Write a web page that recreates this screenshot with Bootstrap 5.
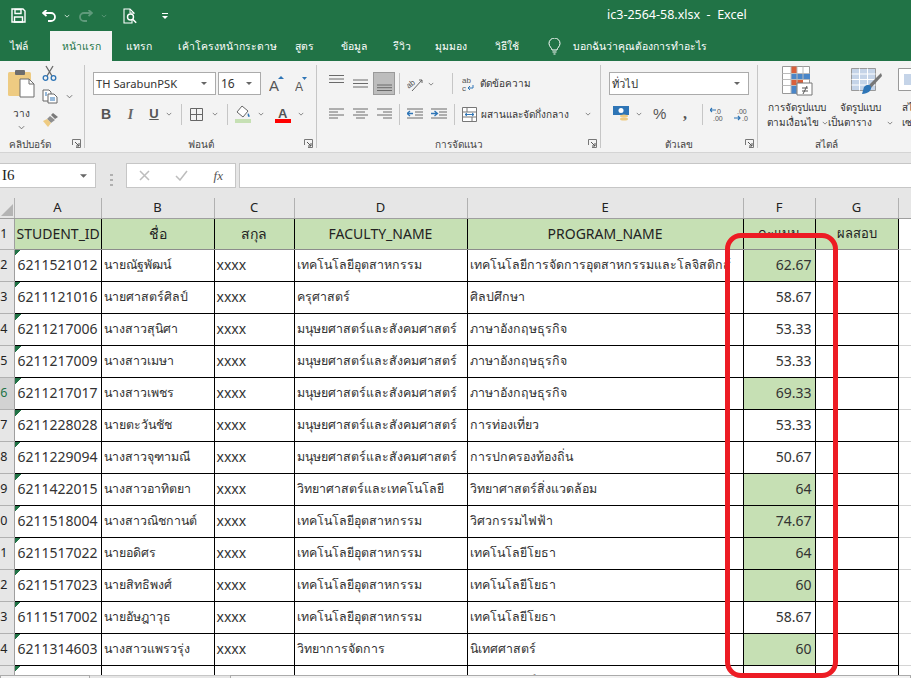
<!DOCTYPE html>
<html lang="th">
<head>
    <meta charset="UTF-8">
    <meta name="viewport" content="width=device-width, initial-scale=1.0">
    <title>ic3-2564-58.xlsx - Excel</title>
    <link href="https://cdn.jsdelivr.net/npm/bootstrap@5.3.0/dist/css/bootstrap.min.css" rel="stylesheet">
    <style>
        html, body { height: 100%; overflow: hidden; }
        body {
            width: 911px;
            height: 678px;
            position: relative;
            background: #e6e6e6;
            color: #333;
            font-family: "Noto Sans", "Liberation Sans", sans-serif;
            font-size: 12px;
        }
        svg { display: block; flex: none; }

        /* small spacing steps bootstrap has no class for */
        .ml4 { margin-left: 4px; } .ml5 { margin-left: 5px; } .ml7 { margin-left: 7px; } .ml8 { margin-left: 8px; }
        .ml9 { margin-left: 9px; } .ml11 { margin-left: 11px; }
        .mx7 { margin-left: 7px; margin-right: 7px; } .mx9 { margin-left: 9px; margin-right: 9px; }
        .mr7 { margin-right: 7px; }

        /* title bar */
        .title-bar { height: 31px; background: #217346; color: #fff; }
        .qat { width: 607px; padding-left: 11px; }
        .qat-title { font-size: 12.5px; white-space: nowrap; }

        /* tabs */
        .tab-bar { height: 30px; background: #217346; }
        .tab-bar .nav-link {
            height: 30px;
            padding: 0;
            color: #fff;
            font-size: 10.4px;
            line-height: 30px;
            text-align: center;
            white-space: nowrap;
        }
        .tab-bar .nav-link.active { background: #f3f3f3; color: #217346; }
        .t-file { width: 36px; margin-left: 1px; margin-right: 13px; }
        .t-home { width: 62px; margin-right: 14px; }
        .t-insert { width: 24px; margin-right: 28px; }
        .t-layout { width: 90px; margin-right: 27px; }
        .t-formula { width: 19px; margin-right: 26px; }
        .t-data { width: 27px; margin-right: 26px; }
        .t-review { width: 16px; margin-right: 26px; }
        .t-view { width: 32px; margin-right: 28px; }
        .t-help { width: 24px; margin-right: 29px; }
        .tell-me { color: #fff; font-size: 10.4px; white-space: nowrap; margin-left: 12px; line-height: 30px; }

        /* ribbon */
        .ribbon { height: 92px; background: #f3f3f3; border-bottom: 1px solid #d4d4d4; overflow: hidden; }
        .rb-group {
            position: relative;
            height: 83px;
            margin-top: 4px;
            flex: none;
            border-right: 1px solid #c6c6c6;
        }
        .rb-clip { width: 85px; }
        .rb-font { width: 232px; padding-left: 8px; }
        .rb-align { width: 284px; padding-left: 12px; }
        .rb-number { width: 157px; padding-left: 8px; }
        .rb-style { width: 153px; border-right: 0; padding-left: 9px; }
        .rb-label {
            position: absolute;
            left: 0; right: 0; bottom: -3px;
            text-align: center;
            font-size: 10px;
            line-height: 14px;
            color: #444;
        }
        .rb-launch { position: absolute; right: 3px; bottom: 0; }
        .rb-combo {
            height: 23px;
            background: #fff;
            border: 1px solid #ababab;
            font-size: 11.2px;
            line-height: 21px;
            padding-left: 2px;
            color: #333;
        }
        .combo-font { width: 123px; margin-right: 2px; }
        .combo-size { width: 43px; font-size: 12px; }
        .combo-num { width: 140px; }
        .rb-line1 { height: 23px; margin-top: 7px; }
        .rb-line2 { height: 24px; margin-top: 7px; }
        .rb-sep { width: 1px; height: 21px; background: #c6c6c6; flex: none; }
        .sep-font { margin: 0 8px 0 9px; }
        .sep-orient { margin: 0 7px 0 4px; }
        .sep-num { margin: 0 7px 0 3px; }
        .align-on { background: #bdbdbd; border: 1px solid #9a9a9a; width: 22px; height: 23px; padding: 7px 3px 0; margin-left: 5px; }
        .rb-text { font-size: 10px; white-space: nowrap; color: #333; }
        .big-btn { font-size: 10px; line-height: 15px; text-align: center; white-space: nowrap; color: #333; }
        .paste-col { width: 38px; }
        .fmt-b { font-family: "Liberation Sans", sans-serif; font-size: 14px; color: #555; width: 26px; }
        .fmt-i { font-family: "Liberation Serif", serif; font-size: 14px; font-weight: 700; color: #666; width: 23px; text-align: center; }
        .fmt-u { font-family: "Liberation Sans", sans-serif; font-size: 13px; color: #555; width: 24px; text-align: center; }
        .orient-chev { margin: 0 18px 0 5px; }
        .cur-chev { margin: 0 11px 0 7px; }
        .num-pct { font-family: "Liberation Sans", sans-serif; font-size: 15px; color: #555; width: 18px; }
        .num-comma { font-family: "Liberation Serif", serif; font-size: 16px; color: #555; width: 28px; line-height: 14px; }
        .style-a { width: 61px; }
        .style-b { width: 56px; margin-left: 5px; }
        .style-b svg:first-child { margin-left: 12px; }
        .style-c { margin-left: 9px; }

        /* formula bar */
        .fx-bar { height: 45px; padding-top: 10px; background: #e6e6e6; }
        .fx-box { height: 25px; background: #fff; border: 1px solid #c6c6c6; flex: none; }
        .fx-name {
            width: 96px;
            border-left: 0;
            padding-left: 2px;
            font-family: "Liberation Serif", serif;
            font-size: 15px;
            line-height: 23px;
            color: #222;
        }
        .fx-dots { width: 30px; }
        .fx-btns { width: 110px; margin-right: 3px; padding: 0 12px 0 12px; }
        .fx-text { flex: 1 1 auto; border-right: 0; }
        .fx-italic { font-family: "Liberation Serif", serif; font-style: italic; font-size: 13px; color: #555; }

        /* sheet */
        .sheet-wrap { height: 477px; overflow: hidden; background: #fff; }
        .sheet {
            --bs-table-border-color: #000;
            --bs-table-bg: transparent;
            width: 1000px;
            margin-left: -16px;
            table-layout: fixed;
            border-collapse: collapse;
            font-size: 12.4px;
            color: #333;
        }
        .sheet > :not(caption) > * > * {
            padding: 0 2px;
            height: 32px;
            border: 1px solid #000;
            vertical-align: middle;
            white-space: nowrap;
            overflow: hidden;
            line-height: 30px;
        }
        .w-rh { width: 30px; } .w-a { width: 87px; } .w-b { width: 113px; } .w-c { width: 80px; }
        .w-d { width: 173px; } .w-e { width: 276px; } .w-f { width: 72px; } .w-g { width: 83px; } .w-h { width: 86px; }
        .sheet > thead .col-head > * {
            height: 20px;
            line-height: 19px;
            padding: 0;
            background: #e6e6e6;
            border: 0;
            border-right: 1px solid #b1b1b1;
            border-bottom: 1px solid #9f9f9f;
            text-align: center;
            font-size: 13px;
            font-weight: 400;
            color: #222;
        }
        .corner-mark { width: 0; height: 0; margin: 5px 1px 0 auto; border-style: solid; border-width: 0 0 12px 12px; border-color: transparent transparent #b4b4b4 transparent; }
        .sheet > :not(caption) > * > .row-no {
            padding: 0 6px 0 0;
            background: #e6e6e6;
            border: 0;
            border-right: 1px solid #9f9f9f;
            border-bottom: 1px solid #b1b1b1;
            text-align: right;
            font-size: 12.5px;
            color: #222;
        }
        .sheet > :not(caption) > * > .row-no.row-on { background: #d2d2d2; color: #217346; }
        .sheet > thead .title-row > * { height: 31px; line-height: 29px; }
        .sheet > thead .title-row > .hd-cell {
            background: #c6e0b4;
            border-bottom-color: #8c8c8c;
            text-align: center;
            font-size: 14px;
            color: #222;
        }
        .sheet > thead .title-row > .hd-left { text-align: left; padding-left: 2px; }
        .sheet > thead .title-row > .hd-thai { font-size: 13px; }
        .sheet > thead .title-row > .hd-big { font-size: 14px; }
        .sheet > :not(caption) > * > .free-cell { border-color: #d4d4d4; border-right: 0; }
        .sheet td.latin { font-size: 14px; }
        .sheet td.id-cell {
            padding-left: 3px;
            font-size: 14px;
            background: linear-gradient(135deg, #217346 50%, transparent 50%) no-repeat 0 0 / 6px 6px;
        }
        .sheet td.score { text-align: right; padding-right: 3px; font-size: 14px; }
        .sheet td.score-on { background: #c6e0b4; }

        /* bottom strip */
        .sheet-foot { position: absolute; left: 0; right: 0; bottom: 0; height: 3px; background: #e6e6e6; border-top: 1px solid #c6c6c6; }
        .foot-tabs { position: absolute; left: 0; bottom: 0; width: 90px; height: 3px; background: #f3f3f3; border: 1px solid #ababab; border-bottom: 0; }
        .foot-scroll { position: absolute; left: 230px; right: 0; bottom: 0; height: 3px; background: #f3f3f3; border: 1px solid #ababab; border-bottom: 0; }

        /* hand drawn highlight */
        .red-frame {
            position: absolute;
            left: 725px;
            top: 233px;
            width: 113px;
            height: 445px;
            border: 5px solid #ed1c24;
            border-radius: 16px;
            pointer-events: none;
        }
    </style>
</head>
<body>
    <svg width="0" height="0" class="position-absolute">
        <symbol id="chev" viewBox="0 0 8 5"><path d="M1 1l3 3 3-3" fill="none" stroke="#666" stroke-width="1"/></symbol>
        <symbol id="launch" viewBox="0 0 9 9"><path d="M.5 6V.5H8.5V8.5H4" fill="none" stroke="#777"/><path d="M3 3l4 4M7 4v3H4" fill="none" stroke="#555"/></symbol>
        <symbol id="arrow-down" viewBox="0 0 8 4"><path d="M0 0h8L4 4z" fill="#666"/></symbol>
        <symbol id="a-top" viewBox="0 0 15 18"><path d="M0 .5h15M0 4h15M0 7.500h15" stroke="#6a6a6a" fill="none"/></symbol>
        <symbol id="a-mid" viewBox="0 0 15 18"><path d="M0 5h15M0 8.500h15M0 12h15" stroke="#6a6a6a" fill="none"/></symbol>
        <symbol id="l-left" viewBox="0 0 15 12"><path d="M0 1h15M0 4h9M0 7h15M0 10h9" stroke="#6a6a6a" fill="none"/></symbol>
        <symbol id="l-center" viewBox="0 0 15 12"><path d="M0 1h15M3 4h9M0 7h15M3 10h9" stroke="#6a6a6a" fill="none"/></symbol>
        <symbol id="l-right" viewBox="0 0 15 12"><path d="M0 1h15M6 4h9M0 7h15M6 10h9" stroke="#6a6a6a" fill="none"/></symbol>
    </svg>

    <!-- title bar -->
    <div class="title-bar d-flex align-items-center">
        <div class="qat d-flex align-items-center">
            <svg width="15" height="15" viewBox="0 0 15 15"><path d="M1 1h11l2 2v11H1z" fill="none" stroke="#fff" stroke-width="1.4"/><path d="M4 1.5h6v4H4zM3.5 9h8v5h-8z" fill="none" stroke="#fff" stroke-width="1.4"/></svg>
            <svg class="ms-3" width="14" height="12" viewBox="0 0 14 12"><path d="M1 3h8a4 4 0 0 1 0 8H6" fill="none" stroke="#fff" stroke-width="1.8"/><path d="M4.5 0L1 3l3.5 3" fill="none" stroke="#fff" stroke-width="1.8"/></svg>
            <svg class="ms-2" width="6" height="4" viewBox="0 0 8 5"><path d="M1 1l3 3 3-3" fill="none" stroke="#cfe3d6" stroke-width="1.2"/></svg>
            <svg class="ml9" width="14" height="12" viewBox="0 0 14 12"><path d="M13 3H5a4 4 0 0 0 0 8h3" fill="none" stroke="#5f9a7b" stroke-width="1.8"/><path d="M9.5 0L13 3 9.5 6" fill="none" stroke="#5f9a7b" stroke-width="1.8"/></svg>
            <svg class="ms-2" width="6" height="4" viewBox="0 0 8 5"><path d="M1 1l3 3 3-3" fill="none" stroke="#5f9a7b" stroke-width="1.2"/></svg>
            <svg class="ms-3" width="15" height="16" viewBox="0 0 15 16"><path d="M9 11.5V15H1V1h6l4 4v1" fill="none" stroke="#fff" stroke-width="1.1"/><path d="M7 1v4h4" fill="none" stroke="#fff"/><circle cx="7.5" cy="9" r="3" fill="none" stroke="#fff" stroke-width="1.4"/><path d="M9.7 11.2l3.5 3.5" stroke="#fff" stroke-width="1.6"/></svg>
            <svg class="ms-4" width="6" height="6" viewBox="0 0 6 6"><path d="M0 0h6v1H0z" fill="#fff"/><path d="M0 3h6L3 6z" fill="#fff"/></svg>
        </div>
        <div class="qat-title">ic3-2564-58.xlsx &nbsp;-&nbsp; Excel</div>
    </div>

    <!-- tabs -->
    <ul class="nav tab-bar flex-nowrap">
        <li class="nav-item t-file"><a class="nav-link" href="#">ไฟล์</a></li>
        <li class="nav-item t-home"><a class="nav-link active" href="#">หน้าแรก</a></li>
        <li class="nav-item t-insert"><a class="nav-link" href="#">แทรก</a></li>
        <li class="nav-item t-layout"><a class="nav-link" href="#">เค้าโครงหน้ากระดาษ</a></li>
        <li class="nav-item t-formula"><a class="nav-link" href="#">สูตร</a></li>
        <li class="nav-item t-data"><a class="nav-link" href="#">ข้อมูล</a></li>
        <li class="nav-item t-review"><a class="nav-link" href="#">รีวิว</a></li>
        <li class="nav-item t-view"><a class="nav-link" href="#">มุมมอง</a></li>
        <li class="nav-item t-help"><a class="nav-link" href="#">วิธีใช้</a></li>
        <li class="nav-item d-flex align-items-center">
            <svg width="13" height="17" viewBox="0 0 13 17"><path d="M4 12c0-2-3-3.500-3-6.500a5.500 5.500 0 0 1 11 0C12 8.500 9 10 9 12z" fill="none" stroke="#fff"/><path d="M4.500 14h4M5.500 16h2" stroke="#fff"/></svg>
            <span class="tell-me">บอกฉันว่าคุณต้องการทำอะไร</span>
        </li>
    </ul>

    <!-- ribbon -->
    <div class="ribbon d-flex">
        <!-- clipboard -->
        <div class="rb-group rb-clip d-flex">
            <div class="paste-col d-flex flex-column align-items-center ps-1">
                <svg class="mt-1" width="29" height="29" viewBox="0 0 29 29"><rect x="1" y="3" width="23" height="24" rx="1.500" fill="#eecb82"/><rect x="8" y="1" width="10" height="5" rx="1" fill="#6d6d6d"/><path d="M13 10h9l5 5v13H13z" fill="#fff" stroke="#6d6d6d"/><path d="M22 10v5h5" fill="none" stroke="#6d6d6d"/></svg>
                <div class="big-btn mt-2">วาง</div>
                <svg class="mt-1" width="7" height="5"><use href="#chev"/></svg>
            </div>
            <div class="d-flex flex-column ms-1 gap-2">
                <svg width="15" height="16" viewBox="0 0 15 16"><path d="M4 1l6 10M11 1L5 11" stroke="#6a6a6a" stroke-width="1.300" fill="none"/><circle cx="3.500" cy="13" r="2.300" fill="none" stroke="#2e75b6" stroke-width="1.300"/><circle cx="11.500" cy="13" r="2.300" fill="none" stroke="#2e75b6" stroke-width="1.300"/></svg>
                <div class="d-flex align-items-center gap-2">
                    <svg width="16" height="15" viewBox="0 0 16 15"><path d="M1 1h6l2 2v9H1z" fill="#fff" stroke="#666"/><path d="M6 5h6l3 3v6H6z" fill="#fff" stroke="#666"/><path d="M8 9h5M8 11h5M3 4h2M3 6h2" stroke="#2e75b6"/></svg>
                    <svg width="7" height="5"><use href="#chev"/></svg>
                </div>
                <svg width="17" height="16" viewBox="0 0 17 16"><path d="M11 1l5 4-3 2-4-4z" fill="#7a7a7a"/><path d="M8 4l5 4-4 3-4-4z" fill="#8f8f8f"/><path d="M5 7l4 4-3 4-5-6z" fill="#eecb82"/></svg>
            </div>
            <div class="rb-label pe-4">คลิปบอร์ด</div>
            <svg class="rb-launch" width="9" height="9"><use href="#launch"/></svg>
        </div>

        <!-- font -->
        <div class="rb-group rb-font">
            <div class="d-flex align-items-center rb-line1">
                <div class="rb-combo combo-font d-flex align-items-center justify-content-between pe-2"><span>TH SarabunPSK</span><svg width="6" height="3"><use href="#arrow-down"/></svg></div>
                <div class="rb-combo combo-size d-flex align-items-center justify-content-between pe-2"><span>16</span><svg width="6" height="3"><use href="#arrow-down"/></svg></div>
                <svg class="ms-2" width="15" height="16" viewBox="0 0 15 16"><text x="0" y="15" font-family="Liberation Sans" font-size="15" fill="#555">A</text><path d="M9 3l3-3 3 3z" fill="#2e75b6"/></svg>
                <svg class="ml11" width="12" height="14" viewBox="0 0 12 14"><text x="0" y="14" font-family="Liberation Sans" font-size="12" fill="#555">A</text><path d="M7 0h5L9.500 3z" fill="#2e75b6"/></svg>
            </div>
            <div class="d-flex align-items-center rb-line2">
                <span class="fmt-b fw-bold ps-2">B</span>
                <span class="fmt-i fst-italic">I</span>
                <span class="fmt-u fw-bold text-decoration-underline">U</span>
                <svg width="6" height="4"><use href="#chev"/></svg>
                <div class="rb-sep sep-font"></div>
                <svg width="13" height="13" viewBox="0 0 13 13"><path d="M.5.5h12v12H.5zM6.500.5v12M.5 6.500h12" fill="none" stroke="#666"/></svg>
                <svg class="mx9" width="6" height="4"><use href="#chev"/></svg>
                <div class="rb-sep mr7"></div>
                <svg width="16" height="18" viewBox="0 0 16 18"><path d="M7 1l6 5-5 6-6-5z" fill="#fff" stroke="#666"/><path d="M13 8c2 2 2 4 1 4s-2-2-1-4z" fill="#2e75b6"/><rect y="14" width="16" height="4" fill="#c6e0b4"/></svg>
                <svg class="mx7" width="6" height="4"><use href="#chev"/></svg>
                <svg class="ms-1" width="16" height="17" viewBox="0 0 16 17"><text x="3" y="12" font-family="Liberation Sans" font-weight="700" font-size="13" fill="#555">A</text><rect y="13" width="16" height="4" fill="#f00"/></svg>
                <svg class="ml7" width="6" height="4"><use href="#chev"/></svg>
            </div>
            <div class="rb-label">ฟอนต์</div>
            <svg class="rb-launch" width="9" height="9"><use href="#launch"/></svg>
        </div>

        <!-- alignment -->
        <div class="rb-group rb-align">
            <div class="d-flex align-items-center rb-line1">
                <svg width="15" height="18"><use href="#a-top"/></svg>
                <svg class="ml9" width="15" height="18"><use href="#a-mid"/></svg>
                <div class="align-on"><svg width="15" height="14" viewBox="0 0 15 14"><path d="M0 5h15M0 7.700h15M0 10.500h15" stroke="#6a6a6a"/></svg></div>
                <div class="rb-sep sep-orient"></div>
                <svg width="16" height="16" viewBox="0 0 16 16"><text x="0" y="10" font-family="Liberation Sans" font-size="8" fill="#555" transform="rotate(-35 5 9)">ab</text><path d="M5 15L15 4M12 4h3v3" fill="none" stroke="#666"/></svg>
                <svg class="orient-chev" width="6" height="4"><use href="#chev"/></svg>
                <div class="rb-sep"></div>
                <svg class="ml9" width="13" height="15" viewBox="0 0 13 15"><text x="0" y="7" font-family="Liberation Sans" font-size="8" fill="#555">ab</text><text x="0" y="15" font-family="Liberation Sans" font-size="8" fill="#555">c</text><path d="M11 9v3H6M8 10l-2 2 2 2" fill="none" stroke="#2e75b6"/></svg>
                <span class="rb-text ml5">ตัดข้อความ</span>
            </div>
            <div class="d-flex align-items-center rb-line2">
                <svg width="15" height="12"><use href="#l-left"/></svg>
                <svg class="ml9" width="15" height="12"><use href="#l-center"/></svg>
                <svg class="ml9" width="15" height="12"><use href="#l-right"/></svg>
                <div class="rb-sep mx7"></div>
                <svg width="16" height="12" viewBox="0 0 16 12"><path d="M0 1h16M8 4h8M8 7h8M0 10h16" stroke="#6a6a6a"/><path d="M0 5.500h6M3 3L0 5.500 3 8" fill="none" stroke="#2e75b6" stroke-width="1.300"/></svg>
                <svg class="ml8" width="16" height="12" viewBox="0 0 16 12"><path d="M0 1h16M8 4h8M8 7h8M0 10h16" stroke="#6a6a6a"/><path d="M0 5.500h6M3.500 3L6.500 5.500 3.500 8" fill="none" stroke="#2e75b6" stroke-width="1.300"/></svg>
                <div class="rb-sep mx7"></div>
                <svg width="15" height="15" viewBox="0 0 15 15"><path d="M.5.5h14v14H.5zM.5 5h14M.5 10h14M5 .5V5M10 10v4.500" fill="#fff" stroke="#777"/><path d="M3 7.500h9M5 6L3 7.500 5 9M10 6l2 1.500L10 9" fill="none" stroke="#2e75b6"/></svg>
                <span class="rb-text ml4">ผสานและจัดกึ่งกลาง</span>
                <svg class="ms-3" width="6" height="4"><use href="#chev"/></svg>
            </div>
            <div class="rb-label">การจัดแนว</div>
            <svg class="rb-launch" width="9" height="9"><use href="#launch"/></svg>
        </div>

        <!-- number -->
        <div class="rb-group rb-number">
            <div class="d-flex align-items-center rb-line1">
                <div class="rb-combo combo-num d-flex align-items-center justify-content-between pe-2"><span>ทั่วไป</span><svg width="6" height="3"><use href="#arrow-down"/></svg></div>
            </div>
            <div class="d-flex align-items-center rb-line2 ps-1">
                <svg width="16" height="16" viewBox="0 0 16 16"><rect width="16" height="9" fill="#2e75b6"/><circle cx="8" cy="4.500" r="2.500" fill="#fff"/><ellipse cx="11" cy="10" rx="4" ry="1.500" fill="#eecb82"/><ellipse cx="11" cy="13" rx="4" ry="1.500" fill="#eecb82"/></svg>
                <svg class="cur-chev" width="6" height="4"><use href="#chev"/></svg>
                <span class="num-pct">%</span>
                <span class="num-comma fw-bold text-center">,</span>
                <div class="rb-sep sep-num"></div>
                <svg width="15" height="15" viewBox="0 0 15 15"><text x="5" y="7" font-family="Liberation Sans" font-size="7" fill="#555">.0</text><text x="3" y="14" font-family="Liberation Sans" font-size="7" fill="#555">.00</text><path d="M6 3H0M2 1L0 3l2 2" fill="none" stroke="#2e75b6" stroke-width="1.200"/></svg>
                <svg class="ml9" width="15" height="15" viewBox="0 0 15 15"><text x="3" y="7" font-family="Liberation Sans" font-size="7" fill="#555">.00</text><text x="8" y="14" font-family="Liberation Sans" font-size="7" fill="#555">.0</text><path d="M0 11h6M4 9l2 2-2 2" fill="none" stroke="#2e75b6" stroke-width="1.200"/></svg>
            </div>
            <div class="rb-label">ตัวเลข</div>
            <svg class="rb-launch" width="9" height="9"><use href="#launch"/></svg>
        </div>

        <!-- styles -->
        <div class="rb-group rb-style d-flex">
            <div class="big-btn style-a d-flex flex-column align-items-center">
                <svg width="31" height="31" viewBox="0 0 31 31"><path d="M.5 1.500h27v27H.5z" fill="#fff" stroke="#999"/><path d="M9 1.500h6v7H9z" fill="#d9603b"/><path d="M9 8.500h19v6H9z" fill="#4a86c8"/><path d="M9 14.500h12v6H9z" fill="#d9603b"/><path d="M9 20.500h6v8H9z" fill="#4a86c8"/><path d="M9 1.500v27M15 1.500v27M21 1.500v13M.5 8.500h27M.5 14.500h27M.5 20.500h15" stroke="#bbb" fill="none"/><path d="M15 18h15v12H15z" fill="#fff" stroke="#777"/><path d="M20 23h6M20 26h6M25 21l-4 8" stroke="#555" fill="none"/></svg>
                <div class="mt-1">การจัดรูปแบบ</div>
                <div>ตามเงื่อนไข <svg class="d-inline" width="6" height="4"><use href="#chev"/></svg></div>
            </div>
            <div class="big-btn style-b d-flex flex-column align-items-center">
                <svg width="31" height="31" viewBox="0 0 31 31"><path d="M.5 3.500h24v22H.5z" fill="#c5d4e8" stroke="#999"/><path d="M.5 9h24M.5 14.500h24M.5 20h24M8.500 3.500v22M16.500 3.500v22" stroke="#fff" fill="none"/><path d="M30 8L18 20l2 3L31 11z" fill="#777"/><path d="M13 22c3-3 6-3 7 0s-3 7-9 7z" fill="#2e75b6"/></svg>
                <div class="mt-1">จัดรูปแบบ</div>
                <div>เป็นตาราง <svg class="d-inline" width="6" height="4"><use href="#chev"/></svg></div>
            </div>
            <div class="big-btn style-c d-flex flex-column">
                <svg width="31" height="31" viewBox="0 0 31 31"><path d="M.5 3.500h24v22H.5z" fill="#fff" stroke="#999"/><path d="M6 9h19v11H6z" fill="#c5d4e8"/></svg>
                <div class="mt-1">สไตล์</div>
                <div>เซลล์</div>
            </div>
            <div class="rb-label pe-3">สไตล์</div>
        </div>
    </div>

    <!-- formula bar -->
    <div class="fx-bar d-flex">
        <div class="fx-box fx-name d-flex justify-content-between align-items-center pe-2"><span>I6</span><svg width="7" height="4"><use href="#arrow-down"/></svg></div>
        <div class="fx-dots d-flex justify-content-center align-items-center">
            <svg width="3" height="13" viewBox="0 0 3 13"><path d="M0 1h3M0 6h3M0 11h3" stroke="#b0b0b0" stroke-width="2"/></svg>
        </div>
        <div class="fx-box fx-btns d-flex justify-content-between align-items-center">
            <svg width="11" height="11" viewBox="0 0 11 11"><path d="M1 1l9 9M10 1l-9 9" stroke="#bdbdbd" stroke-width="1.500"/></svg>
            <svg width="13" height="11" viewBox="0 0 13 11"><path d="M1 6l4 4 7-9" fill="none" stroke="#bdbdbd" stroke-width="1.500"/></svg>
            <span class="fx-italic">fx</span>
        </div>
        <div class="fx-box fx-text"></div>
    </div>

    <!-- sheet -->
    <div class="sheet-wrap">
        <table class="table sheet mb-0">
            <colgroup>
                <col class="w-rh"><col class="w-a"><col class="w-b"><col class="w-c"><col class="w-d"><col class="w-e"><col class="w-f"><col class="w-g"><col class="w-h">
            </colgroup>
            <thead>
                <tr class="col-head">
                    <th><div class="corner-mark"></div></th>
                    <th>A</th><th>B</th><th>C</th><th>D</th><th>E</th><th>F</th><th>G</th><th></th>
                </tr>
                <tr class="title-row">
                    <th class="row-no fw-normal">1</th>
                    <th class="hd-cell hd-left fw-normal">STUDENT_ID</th>
                    <th class="hd-cell hd-big fw-normal">ชื่อ</th>
                    <th class="hd-cell hd-big fw-normal">สกุล</th>
                    <th class="hd-cell fw-normal">FACULTY_NAME</th>
                    <th class="hd-cell fw-normal">PROGRAM_NAME</th>
                    <th class="hd-cell hd-thai fw-normal">คะแนน</th>
                    <th class="hd-cell hd-thai fw-normal">ผลสอบ</th>
                    <th class="free-cell"></th>
                </tr>
            </thead>
            <tbody>
                <tr><td class="row-no">2</td><td class="id-cell">6211521012</td><td>นายณัฐพัฒน์</td><td class="latin">xxxx</td><td>เทคโนโลยีอุตสาหกรรม</td><td>เทคโนโลยีการจัดการอุตสาหกรรมและโลจิสติกส์</td><td class="score score-on">62.67</td><td></td><td class="free-cell"></td></tr>
                <tr><td class="row-no">3</td><td class="id-cell">6211121016</td><td>นายศาสตร์ศิลป์</td><td class="latin">xxxx</td><td>ครุศาสตร์</td><td>ศิลปศึกษา</td><td class="score">58.67</td><td></td><td class="free-cell"></td></tr>
                <tr><td class="row-no">4</td><td class="id-cell">6211217006</td><td>นางสาวสุนิศา</td><td class="latin">xxxx</td><td>มนุษยศาสตร์และสังคมศาสตร์</td><td>ภาษาอังกฤษธุรกิจ</td><td class="score">53.33</td><td></td><td class="free-cell"></td></tr>
                <tr><td class="row-no">5</td><td class="id-cell">6211217009</td><td>นางสาวเมษา</td><td class="latin">xxxx</td><td>มนุษยศาสตร์และสังคมศาสตร์</td><td>ภาษาอังกฤษธุรกิจ</td><td class="score">53.33</td><td></td><td class="free-cell"></td></tr>
                <tr><td class="row-no row-on">6</td><td class="id-cell">6211217017</td><td>นางสาวเพชร</td><td class="latin">xxxx</td><td>มนุษยศาสตร์และสังคมศาสตร์</td><td>ภาษาอังกฤษธุรกิจ</td><td class="score score-on">69.33</td><td></td><td class="free-cell"></td></tr>
                <tr><td class="row-no">7</td><td class="id-cell">6211228028</td><td>นายตะวันชัช</td><td class="latin">xxxx</td><td>มนุษยศาสตร์และสังคมศาสตร์</td><td>การท่องเที่ยว</td><td class="score">53.33</td><td></td><td class="free-cell"></td></tr>
                <tr><td class="row-no">8</td><td class="id-cell">6211229094</td><td>นางสาวจุฑามณี</td><td class="latin">xxxx</td><td>มนุษยศาสตร์และสังคมศาสตร์</td><td>การปกครองท้องถิ่น</td><td class="score">50.67</td><td></td><td class="free-cell"></td></tr>
                <tr><td class="row-no">9</td><td class="id-cell">6211422015</td><td>นางสาวอาทิตยา</td><td class="latin">xxxx</td><td>วิทยาศาสตร์และเทคโนโลยี</td><td>วิทยาศาสตร์สิ่งแวดล้อม</td><td class="score score-on">64</td><td></td><td class="free-cell"></td></tr>
                <tr><td class="row-no">10</td><td class="id-cell">6211518004</td><td>นางสาวณิชกานต์</td><td class="latin">xxxx</td><td>เทคโนโลยีอุตสาหกรรม</td><td>วิศวกรรมไฟฟ้า</td><td class="score score-on">74.67</td><td></td><td class="free-cell"></td></tr>
                <tr><td class="row-no">11</td><td class="id-cell">6211517022</td><td>นายอดิศร</td><td class="latin">xxxx</td><td>เทคโนโลยีอุตสาหกรรม</td><td>เทคโนโลยีโยธา</td><td class="score score-on">64</td><td></td><td class="free-cell"></td></tr>
                <tr><td class="row-no">12</td><td class="id-cell">6211517023</td><td>นายสิทธิพงศ์</td><td class="latin">xxxx</td><td>เทคโนโลยีอุตสาหกรรม</td><td>เทคโนโลยีโยธา</td><td class="score score-on">60</td><td></td><td class="free-cell"></td></tr>
                <tr><td class="row-no">13</td><td class="id-cell">6111517002</td><td>นายอัษฎาวุธ</td><td class="latin">xxxx</td><td>เทคโนโลยีอุตสาหกรรม</td><td>เทคโนโลยีโยธา</td><td class="score">58.67</td><td></td><td class="free-cell"></td></tr>
                <tr><td class="row-no">14</td><td class="id-cell">6211314603</td><td>นางสาวแพรวรุ่ง</td><td class="latin">xxxx</td><td>วิทยาการจัดการ</td><td>นิเทศศาสตร์</td><td class="score score-on">60</td><td></td><td class="free-cell"></td></tr>
                <tr><td class="row-no">15</td><td class="id-cell"></td><td></td><td></td><td>วิทยาการจัดการ</td><td>นิเทศศาสตร์</td><td class="score"></td><td></td><td class="free-cell"></td></tr>
            </tbody>
        </table>
    </div>

    <!-- bottom strip -->
    <div class="sheet-foot"></div>
    <div class="foot-tabs"></div>
    <div class="foot-scroll"></div>

    <!-- red highlight around the score column -->
    <div class="red-frame"></div>

    <script src="https://cdn.jsdelivr.net/npm/bootstrap@5.3.0/dist/js/bootstrap.bundle.min.js"></script>
</body>
</html>
